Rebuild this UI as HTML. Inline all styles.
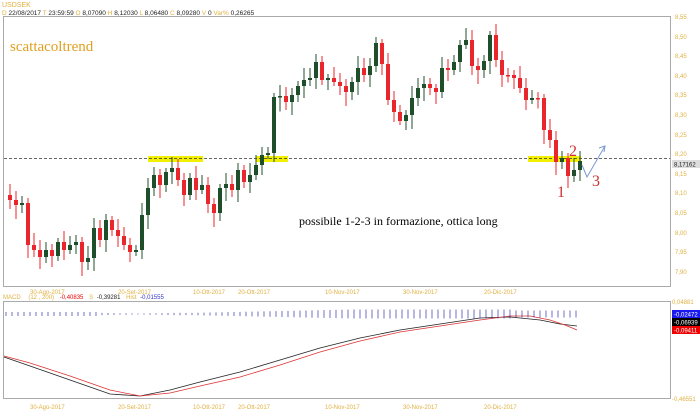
<!DOCTYPE html>
<html><head><meta charset="utf-8"><style>
body{margin:0;background:#fff;width:700px;height:414px;overflow:hidden;font-family:"Liberation Sans",sans-serif}
</style></head><body>
<svg width="700" height="414" xmlns="http://www.w3.org/2000/svg" font-family="Liberation Sans, sans-serif">
<text x="2" y="7" font-size="7" fill="#e0b040">USDSEK</text>
<text x="2" y="15" font-size="6.5" fill="#222"><tspan fill="#e0b040">D</tspan> 22/08/2017 <tspan fill="#e0b040">T</tspan> 23:59:59 <tspan fill="#e0b040">O</tspan> 8,07090 <tspan fill="#e0b040">H</tspan> 8,12030 <tspan fill="#e0b040">L</tspan> 8,06480 <tspan fill="#e0b040">C</tspan> 8,09280 <tspan fill="#e0b040">V</tspan> 0 <tspan fill="#e0b040">Var%</tspan> 0,26265</text>
<rect x="3.5" y="16.5" width="667" height="270" fill="none" stroke="#aaa"/>
<rect x="3.5" y="301.5" width="667" height="97" fill="none" stroke="#aaa"/>
<g font-size="6" fill="#e0b040">
<text x="675" y="19">8,55</text><text x="675" y="39">8,50</text><text x="675" y="58">8,45</text><text x="675" y="78">8,40</text><text x="675" y="97">8,35</text><text x="675" y="117">8,30</text><text x="675" y="137">8,25</text><text x="675" y="156">8,20</text><text x="675" y="176">8,15</text><text x="675" y="195">8,10</text><text x="675" y="215">8,05</text><text x="675" y="235">8,00</text><text x="675" y="254">7,95</text><text x="675" y="274">7,90</text>
<text x="672" y="304">0,04881</text><text x="672" y="401">-0,46551</text>
</g>
<rect x="672" y="160" width="28" height="8" fill="#ddd"/><text x="674" y="166.5" font-size="6" fill="#222">8,17162</text>
<rect x="672" y="310" width="28" height="8" fill="#1a1aee"/><text x="674" y="316.5" font-size="6" fill="#fff">-0,02472</text>
<rect x="672" y="318" width="28" height="8" fill="#000"/><text x="674" y="324.5" font-size="6" fill="#fff">-0,06939</text>
<rect x="672" y="326" width="28" height="8" fill="#e00"/><text x="674" y="332.5" font-size="6" fill="#fff">-0,09411</text>
<g font-size="6" fill="#e0b040">
<text x="30" y="294">30-Ago-2017</text><text x="118" y="294">20-Set-2017</text><text x="193" y="294">10-Ott-2017</text><text x="238" y="294">20-Ott-2017</text><text x="325" y="294">10-Nov-2017</text><text x="403" y="294">30-Nov-2017</text><text x="484" y="294">20-Dic-2017</text>
<text x="30" y="409">30-Ago-2017</text><text x="118" y="409">20-Set-2017</text><text x="193" y="409">10-Ott-2017</text><text x="238" y="409">20-Ott-2017</text><text x="325" y="409">10-Nov-2017</text><text x="403" y="409">30-Nov-2017</text><text x="484" y="409">20-Dic-2017</text>
</g>
<text x="3" y="299" font-size="6" fill="#e0b040">MACD <tspan dx="6">(12 , 200)</tspan> <tspan fill="#e00" dx="4">-0,40835</tspan> <tspan dx="4">S</tspan> <tspan fill="#222" dx="2">-0,39281</tspan> <tspan dx="4">Hist</tspan> <tspan fill="#33c" dx="2">-0,01555</tspan></text>
<rect x="148" y="156" width="55" height="6" fill="#f2f000"/>
<rect x="256" y="156" width="32" height="6" fill="#f2f000"/>
<rect x="528" y="156" width="53" height="6" fill="#f2f000"/>
<line x1="4" y1="158.5" x2="670" y2="158.5" stroke="#333" stroke-dasharray="3,2" stroke-width="0.8"/>
<g id="c" stroke-width="1"></g>
<text x="10" y="51" font-family="Liberation Serif, serif" font-size="15" fill="#e0a020">scattacoltrend</text>
<text x="299" y="225" font-family="Liberation Serif, serif" font-size="12" fill="#000">possibile 1-2-3 in formazione, ottica long</text>
<text x="569" y="156" font-family="Liberation Serif, serif" font-size="16" fill="#c33">2</text>
<text x="557" y="197" font-family="Liberation Serif, serif" font-size="16" fill="#c33">1</text>
<text x="592" y="186" font-family="Liberation Serif, serif" font-size="16" fill="#c33">3</text>
<polyline points="582,165 587,177 605,146" fill="none" stroke="#7b9ad0" stroke-width="1"/>
<polyline points="599,148 605,146 604,152" fill="none" stroke="#7b9ad0" stroke-width="1"/>
<polyline points="4,357 30,366 70,380 110,394 140,396 170,390 200,382 240,372 280,360 320,348 360,338 400,330 440,324 480,318 510,317 540,320 560,324 577,326" fill="none" stroke="#222" stroke-width="0.8"/>
<polyline points="4,356 30,363 70,376 110,390 140,396 170,393 200,386 240,377 280,365 320,352 360,341 400,332 440,326 480,320 510,316 530,316 550,320 565,325 577,330" fill="none" stroke="#d33" stroke-width="0.8"/>
<g id="h" stroke="#33a" stroke-width="0.7"></g>
</svg>
<script>
var NS='http://www.w3.org/2000/svg';
function el(p,n,a){var e=document.createElementNS(NS,n);for(var k in a)e.setAttribute(k,a[k]);p.appendChild(e);}
var ys=[195,200,205,203,245,250,257,250,256,242,250,245,242,262,258,228,240,220,230,236,245,252,250,215,188,175,185,172,168,180,195,178,190,185,204,213,188,184,190,170,182,175,165,155,153,97,96,102,95,86,80,78,62,80,78,82,86,92,82,68,75,66,43,64,100,112,121,115,98,88,84,88,92,68,70,62,45,40,66,70,61,35,60,75,75,78,88,100,98,98,130,140,162,158,176,170,161];
var g=document.getElementById('c');
for(var i=1;i<ys.length;i++){var x=8+i*6-6,o=ys[i-1],c=ys[i];var up=c<o;var col=up?'#1f4f2a':'#e8262b';var t=Math.min(o,c),b=Math.max(o,c);if(b-t<1.5){b=t+1.5}
var hi=t-4-(i*7%9),lo=b+4+(i*5%11);
el(g,'line',{x1:x+2,y1:hi,x2:x+2,y2:lo,stroke:col});
el(g,'rect',{x:x,y:t,width:4,height:b-t,fill:col});}
var h=document.getElementById('h');
for(var j=0;j<96;j++){var x=6+j*6;var m=Math.abs(j-22);var len=j<16?4:(j<30?1+m*0.2:Math.min(9,2+(j-30)*0.25));if(j>84)len=7;
el(h,'line',{x1:x,y1:314-len/2,x2:x,y2:314+len/2});}
</script>
</body></html>
